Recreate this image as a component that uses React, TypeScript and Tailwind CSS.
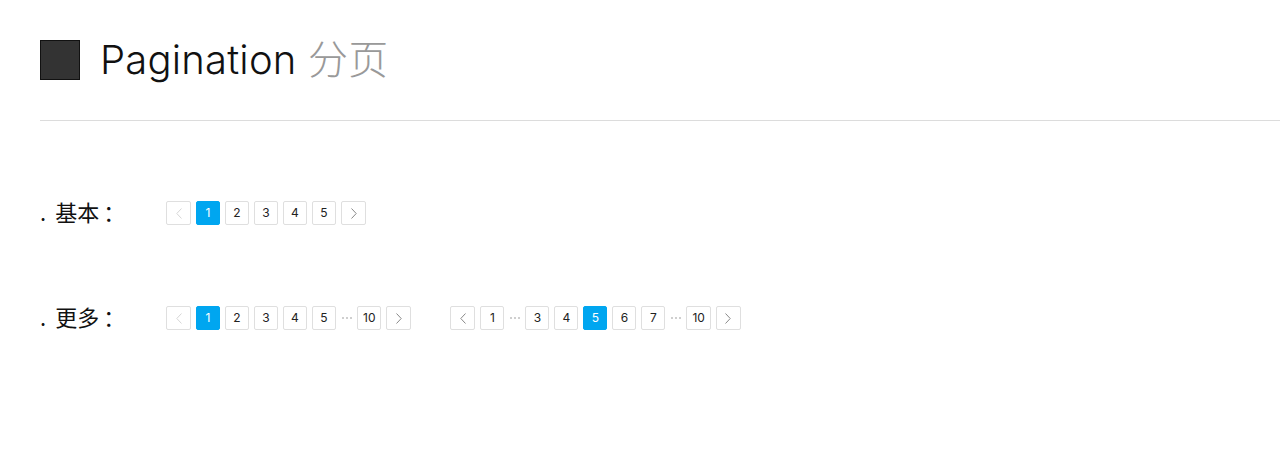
import React from "react";

const Prev = ({ disabled }: { disabled?: boolean }) => (
  <svg width="6" height="11" viewBox="0 0 6 11" fill="none">
    <path d="M5.5 0.5L0.8 5.5l4.7 5" stroke={disabled ? "#d6d6d6" : "#888"} strokeWidth="1" />
  </svg>
);
const Next = () => (
  <svg width="6" height="11" viewBox="0 0 6 11" fill="none">
    <path d="M0.5 0.5l4.7 5-4.7 5" stroke="#888" strokeWidth="1" />
  </svg>
);

type Item = number | "..." | "prev" | "next";

function Btn({ item, active, disabled }: { item: Item; active?: boolean; disabled?: boolean }) {
  if (item === "...") {
    return (
      <span className="w-[11px] h-6 flex items-center justify-center gap-[2px]">
        <span className="w-[2px] h-[2px] bg-[#cfcfcf]" />
        <span className="w-[2px] h-[2px] bg-[#cfcfcf]" />
        <span className="w-[2px] h-[2px] bg-[#cfcfcf]" />
      </span>
    );
  }
  const base =
    "h-6 min-w-6 px-[5px] flex items-center justify-center rounded-[2px] border text-[12px] leading-none";
  if (active) {
    return <span className={`${base} bg-[#00a6f0] border-[#00a6f0] text-white`}>{item}</span>;
  }
  const isArrow = item === "prev" || item === "next";
  return (
    <span className={`${base} ${isArrow ? "w-[25px]" : ""} bg-white border-[#dfdfdf] text-[#222]`}>
      {item === "prev" ? <Prev disabled={disabled} /> : item === "next" ? <Next /> : item}
    </span>
  );
}

function Pager({ items, active, prevDisabled }: { items: Item[]; active: number; prevDisabled?: boolean }) {
  return (
    <div className="flex items-center gap-[5px]">
      {items.map((it, i) => (
        <Btn key={i} item={it} active={it === active} disabled={it === "prev" && prevDisabled} />
      ))}
    </div>
  );
}

function Label({ text }: { text: string }) {
  return (
    <div
      className="w-[126px] pb-1 flex items-center text-[22px] leading-none text-[#111]"
      style={{ fontFamily: '"Noto Sans CJK SC", sans-serif' }}
    >
      <span>.</span>
      <span className="ml-[9px]">{text}</span>
      <span className="ml-[4px]">：</span>
    </div>
  );
}

export default function App() {
  return (
    <div
      className="w-[1280px] h-[449px] bg-white overflow-hidden"
      style={{ fontFamily: 'Inter, "Noto Sans CJK SC", sans-serif' }}
    >
      <div className="pl-10 pt-10 flex items-center gap-5 h-20">
        <div className="w-10 h-10 bg-[#333] border border-[#111]" />
        <h1 className="text-[40px] leading-none font-light text-[#111] tracking-[0.2px]">
          Pagination <span className="text-[#999]">分页</span>
        </h1>
      </div>
      <div className="ml-10 mt-10 h-px bg-[#dcdcdc]" />

      <div className="pl-10 mt-[80px] flex items-center h-6">
        <Label text="基本" />
        <Pager items={["prev", 1, 2, 3, 4, 5, "next"]} active={1} prevDisabled />
      </div>

      <div className="pl-10 mt-[81px] flex items-center h-6">
        <Label text="更多" />
        <Pager items={["prev", 1, 2, 3, 4, 5, "...", 10, "next"]} active={1} prevDisabled />
        <div className="w-[39px]" />
        <Pager items={["prev", 1, "...", 3, 4, 5, 6, 7, "...", 10, "next"]} active={5} />
      </div>
    </div>
  );
}
